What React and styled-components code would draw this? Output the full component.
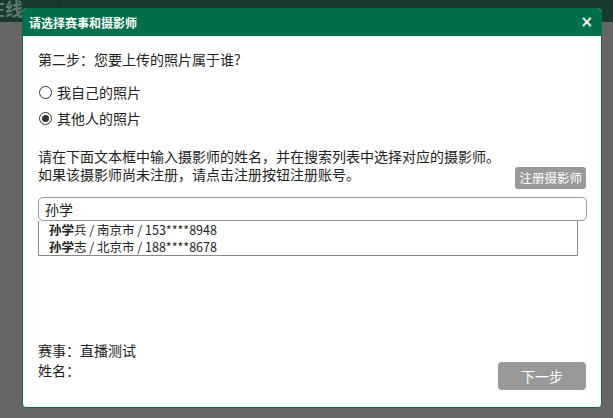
import React from "react";
import styled, { createGlobalStyle } from "styled-components";

const Global = createGlobalStyle`
  html, body { margin: 0; padding: 0; }
  body {
    width: 613px;
    height: 418px;
    overflow: hidden;
    background: #666666;
    font-family: "Noto Sans CJK SC", "Noto Sans", sans-serif;
  }
`;

const Page = styled.div`
  position: relative;
  width: 613px;
  height: 418px;
`;

const TopBar = styled.div`
  height: 22px;
  background: #1b3a2f;
  display: flex;
  align-items: flex-end;
`;

const TopTitle = styled.div`
  width: 60px;
  height: 22px;
  border-right: 1px solid #123026;
  box-sizing: border-box;
  color: #5f7a70;
  font-size: 18px;
  font-weight: bold;
  line-height: 16px;
  overflow: hidden;
  white-space: nowrap;
  text-indent: -13px;
`;

const Dialog = styled.div`
  position: absolute;
  left: 22px;
  top: 8px;
  width: 580px;
  height: 400px;
  box-sizing: border-box;
  background: #fff;
  border: 1px solid #00704a;
  border-radius: 4px;
  display: flex;
  flex-direction: column;
  overflow: hidden;
`;

const Header = styled.div`
  height: 27px;
  background: #00704a;
  display: flex;
  align-items: center;
  justify-content: space-between;
  padding: 0 8px 0 6px;
  color: #fff;
`;

const HeaderTitle = styled.div`
  font-size: 12px;
  font-weight: bold;
`;

const Close = styled.div`
  font-family: "DejaVu Sans", sans-serif;
  font-size: 15px;
  font-weight: bold;
  line-height: 1;
`;

const Body = styled.div`
  flex: 1;
  display: flex;
  flex-direction: column;
  padding: 14px 14px 17px 15px;
  color: #222;
  font-size: 14px;
`;

const StepTitle = styled.div`
  line-height: 18px;
  margin-bottom: 11px;
`;

const RadioRow = styled.label`
  display: flex;
  align-items: center;
  height: 26px;
  line-height: 18px;
`;

const RadioCircle = styled.span`
  width: 11px;
  height: 11px;
  border: 1px solid #333;
  border-radius: 50%;
  box-sizing: content-box;
  margin: 0 5px 0 1px;
  display: flex;
  align-items: center;
  justify-content: center;
  &::after {
    content: "";
    width: 7px;
    height: 7px;
    border-radius: 50%;
    background: ${(p) => (p.$checked ? "#333" : "transparent")};
  }
`;

const Hint = styled.div`
  margin-top: 16px;
  line-height: 18px;
  display: flex;
  flex-direction: column;
`;

const HintLine = styled.div`
  display: flex;
  justify-content: space-between;
  align-items: flex-end;
`;

const SmallButton = styled.button`
  background: #999;
  color: #fff;
  border: none;
  border-radius: 3px;
  font-family: inherit;
  font-size: 12.5px;
  height: 22px;
  padding: 0 4px;
  margin-right: 1px;
  margin-bottom: -6px;
  line-height: 22px;
`;

const Search = styled.div`
  margin-top: 14px;
  display: flex;
  flex-direction: column;
`;

const Input = styled.div`
  height: 24px;
  box-sizing: border-box;
  border: 1px solid #999;
  border-radius: 5px;
  padding: 0 6px;
  font-size: 14px;
  line-height: 22px;
  color: #222;
`;

const List = styled.div`
  width: 540px;
  box-sizing: border-box;
  border: 1px solid #888;
  border-top: none;
  padding: 0 0 0 10px;
`;

const Item = styled.div`
  font-size: 12.5px;
  line-height: 17px;
  color: #222;
  b { font-weight: bold; }
`;

const Footer = styled.div`
  margin-top: auto;
  display: flex;
  justify-content: space-between;
  align-items: flex-end;
`;

const Info = styled.div`
  line-height: 20px;
  margin-bottom: 10px;
`;

const NextButton = styled.button`
  width: 88px;
  height: 28px;
  background: #999;
  color: #fff;
  border: none;
  border-radius: 4px;
  font-family: inherit;
  font-size: 14px;
  margin-right: 1px;
`;

export default function App() {
  return (
    <>
      <Global />
      <Page>
        <TopBar>
          <TopTitle>在线</TopTitle>
        </TopBar>
        <Dialog>
          <Header>
            <HeaderTitle>请选择赛事和摄影师</HeaderTitle>
            <Close>×</Close>
          </Header>
          <Body>
            <StepTitle>第二步：您要上传的照片属于谁?</StepTitle>
            <RadioRow>
              <RadioCircle />
              我自己的照片
            </RadioRow>
            <RadioRow>
              <RadioCircle $checked />
              其他人的照片
            </RadioRow>
            <Hint>
              <div>请在下面文本框中输入摄影师的姓名，并在搜索列表中选择对应的摄影师。</div>
              <HintLine>
                <span>如果该摄影师尚未注册，请点击注册按钮注册账号。</span>
                <SmallButton>注册摄影师</SmallButton>
              </HintLine>
            </Hint>
            <Search>
              <Input>孙学</Input>
              <List>
                <Item><b>孙学</b>兵 / 南京市 / 153****8948</Item>
                <Item><b>孙学</b>志 / 北京市 / 188****8678</Item>
              </List>
            </Search>
            <Footer>
              <Info>
                <div>赛事：直播测试</div>
                <div>姓名：</div>
              </Info>
              <NextButton>下一步</NextButton>
            </Footer>
          </Body>
        </Dialog>
      </Page>
    </>
  );
}
